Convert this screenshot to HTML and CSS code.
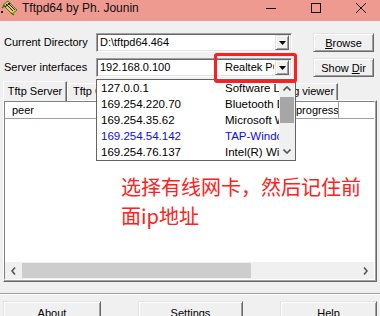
FILE: index.html
```html
<!DOCTYPE html>
<html>
<head>
<meta charset="utf-8">
<link rel="stylesheet" href="styles.css">
</head>
<body>
<div class="win">
  <div class="titlebar">
    <svg class="appicon" width="17" height="16" viewBox="0 0 17 16">
      <path d="M2 5 L7 1 L16 10 L11 14 Z" fill="#f4c24a" stroke="#2a8a20" stroke-width="1"/>
      <path d="M5 4 L12 11 M7 3 L14 10 M4 7 L9 3" stroke="#1a1a1a" stroke-width="1" fill="none"/>
      <path d="M1 8 L4 5 M10 13 L13 15" stroke="#1c7a14" stroke-width="1.2"/>
      <rect x="0" y="11" width="2" height="2" fill="#222"/>
    </svg>
    <span class="title">Tftpd64 by Ph. Jounin</span>
    <div class="caps">
      <span class="cap"><svg width="10" height="10" viewBox="0 0 10 10"><path d="M0 5.5 H10" stroke="#111" stroke-width="1"/></svg></span>
      <span class="cap"><svg width="10" height="10" viewBox="0 0 10 10"><rect x="0.5" y="0.5" width="9" height="9" fill="none" stroke="#111" stroke-width="1"/></svg></span>
      <span class="cap"><svg width="10" height="10" viewBox="0 0 10 10"><path d="M0 0 L10 10 M10 0 L0 10" stroke="#111" stroke-width="1"/></svg></span>
    </div>
  </div>

  <div class="form">
    <span class="label">Current Directory</span>
    <div class="combo">
      <span class="val">D:\tftpd64.464</span>
      <span class="dd"><svg width="7" height="4" viewBox="0 0 7 4"><path d="M0 0 H7 L3.5 4 Z" fill="#000"/></svg></span>
    </div>
    <button class="btn side"><u>B</u>rowse</button>

    <span class="label">Server interfaces</span>
    <div class="combo">
      <span class="val ip">192.168.0.100</span>
      <span class="val2">Realtek PCIe GbE Family Controller</span>
      <span class="dd"><svg width="7" height="4" viewBox="0 0 7 4"><path d="M0 0 H7 L3.5 4 Z" fill="#000"/></svg></span>
    </div>
    <button class="btn side">Show <u>D</u>ir</button>
  </div>

  <div class="tabs">
    <span class="tab sel">Tftp Server</span>
    <span class="tab w2">Tftp Client</span>
    <span class="tab w3">DHCP server</span>
    <span class="tab w3">Syslog server</span>
    <span class="tab w5">Log viewer</span>
  </div>

  <div class="panel">
    <div class="listview">
      <div class="lvhead">
        <span class="col c1">peer</span>
        <span class="col c2">file</span>
        <span class="col c3">start time</span>
        <span class="col c4">progress</span>
        <span class="col c5"></span>
      </div>
      <div class="lvbody"></div>
      <div class="hscroll">
        <span class="harrow"><svg width="5" height="8" viewBox="0 0 5 8"><path d="M4 0.5 L1 4 L4 7.5" stroke="#555" stroke-width="1.6" fill="none"/></svg></span>
        <span class="hthumb"></span>
        <span class="htrack"></span>
        <span class="harrow"><svg width="5" height="8" viewBox="0 0 5 8"><path d="M1 0.5 L4 4 L1 7.5" stroke="#555" stroke-width="1.6" fill="none"/></svg></span>
      </div>
    </div>
  </div>

  <div class="sep"></div>

  <div class="buttons">
    <button class="btn bot b1"><u>A</u>bout</button>
    <button class="btn bot b2"><u>S</u>ettings</button>
    <button class="btn bot b3"><u>H</u>elp</button>
  </div>

  <div class="droplist">
    <div class="items">
      <div class="item"><span class="ic1">127.0.0.1</span><span class="ic2">Software Loopback Interface 1</span></div>
      <div class="item"><span class="ic1">169.254.220.70</span><span class="ic2">Bluetooth Device</span></div>
      <div class="item"><span class="ic1">169.254.35.62</span><span class="ic2">Microsoft Wi-Fi Direct</span></div>
      <div class="item blue"><span class="ic1">169.254.54.142</span><span class="ic2">TAP-Windows Adapter</span></div>
      <div class="item"><span class="ic1">169.254.76.137</span><span class="ic2">Intel(R) Wi-Fi 6</span></div>
    </div>
    <div class="vscroll">
      <span class="varrow"><svg width="8" height="5" viewBox="0 0 8 5"><path d="M0.5 4.5 L4 1 L7.5 4.5" stroke="#555" stroke-width="1.6" fill="none"/></svg></span>
      <span class="vthumb"></span>
      <span class="vtrack"></span>
      <span class="varrow"><svg width="8" height="5" viewBox="0 0 8 5"><path d="M0.5 0.5 L4 4 L7.5 0.5" stroke="#555" stroke-width="1.6" fill="none"/></svg></span>
    </div>
  </div>

  <div class="highlight"></div>
  <div class="note">选择有线网卡，然后记住前<br>面ip地址</div>
</div>
</body>
</html>
```

FILE: styles.css
```css
* { box-sizing: border-box; }
html, body { margin: 0; padding: 0; }
body { background: #f0f0f0; }

.win {
  position: relative;
  width: 380px;
  height: 316px;
  overflow: hidden;
  background: #f0f0f0;
  font-family: "Liberation Sans", Arial, sans-serif;
  font-size: 11px;
  color: #000;
}

/* title bar */
.titlebar {
  height: 21px;
  background: #ee9a90;
  display: flex;
  align-items: flex-start;
}
.appicon { margin: 0 0 0 1px; flex: none; }
.title {
  margin-left: 4px;
  font-size: 12px;
  line-height: 15px;
  padding-top: 1px;
  color: #111;
}
.caps {
  margin-left: auto;
  margin-right: -3px;
  display: flex;
}
.cap {
  width: 45px;
  height: 14px;
  display: flex;
  align-items: center;
  justify-content: center;
  padding-top: 1px;
}

/* form rows */
.form {
  padding: 12px 0 0 4px;
  display: grid;
  grid-template-columns: 92px 196px 82px;
  grid-template-rows: 19px 19px;
  row-gap: 6px;
  align-items: center;
}
.label { line-height: 13px; }
.combo {
  height: 19px;
  background: #fff;
  border: 1px solid;
  border-color: #a0a0a0 #fff #fff #a0a0a0;
  box-shadow: inset 1px 1px #696969, inset -1px -1px #e3e3e3;
  display: flex;
  align-items: center;
  padding: 2px 2px 2px 3px;
  overflow: hidden;
}
.val { flex: 1; white-space: nowrap; line-height: 13px; }
.val.ip { flex: none; width: 125px; }
.val2 {
  flex: 1;
  white-space: nowrap;
  overflow: hidden;
  line-height: 13px;
}
.dd {
  flex: none;
  width: 14px;
  height: 15px;
  margin-left: 1px;
  background: #f0f0f0;
  border: 1px solid;
  border-color: #e3e3e3 #696969 #696969 #e3e3e3;
  box-shadow: inset 1px 1px #fff, inset -1px -1px #a0a0a0;
  display: flex;
  align-items: center;
  justify-content: center;
}
.btn {
  font-family: "Liberation Sans", Arial, sans-serif;
  font-size: 11px;
  color: #000;
  background: #f0f0f0;
  border: 1px solid;
  border-color: #e3e3e3 #696969 #696969 #e3e3e3;
  box-shadow: inset 1px 1px #fff, inset -1px -1px #a0a0a0;
  padding: 0;
  margin: 0;
  white-space: nowrap;
}
.btn.side {
  justify-self: end;
  width: 61px;
  height: 19px;
}

/* tabs */
.tabs {
  margin-top: 4px;
  padding-left: 3px;
  height: 19px;
  display: flex;
  align-items: flex-end;
  position: relative;
  z-index: 1;
}
.tab {
  height: 17px;
  line-height: 15px;
  text-align: center;
  white-space: nowrap;
  background: #f0f0f0;
  border-top: 1px solid #fff;
  border-left: 1px solid #fff;
  border-right: 1px solid #696969;
  box-shadow: inset -1px 0 #a0a0a0;
}
.tab.sel {
  width: 64px;
  height: 20px;
  margin-bottom: -1px;
  line-height: 18px;
}
.tab.w2 { width: 62px; }
.tab.w3 { width: 74px; }
.tab.w5 { width: 61px; }

/* panel + list view */
.panel {
  margin: 0 3px;
  height: 182px;
  border: 1px solid;
  border-color: #fff #696969 #696969 #fff;
  box-shadow: inset -1px -1px #a0a0a0;
  padding: 0 1px 1px 0;
}
.listview {
  height: 100%;
  background: #fff;
  border: 1px solid;
  border-color: #828282 #fff #fff #828282;
  display: flex;
  flex-direction: column;
}
.lvhead {
  height: 17px;
  display: flex;
  border-bottom: 1px solid #a0a0a0;
  flex: none;
}
.col {
  line-height: 16px;
  padding-left: 7px;
  border-right: 1px solid #a0a0a0;
  white-space: nowrap;
  overflow: hidden;
}
.c1 { width: 115px; }
.c2 { width: 80px; }
.c3 { width: 90px; }
.c4 { width: 49px; padding-left: 6px; }
.c5 { flex: 1; border-right: none; }
.lvbody { flex: 1; }
.hscroll {
  height: 17px;
  flex: none;
  display: flex;
  background: #f0f0f0;
}
.harrow {
  width: 17px;
  display: flex;
  align-items: center;
  justify-content: center;
}
.hthumb { width: 229px; background: #cdcdcd; margin: 1px 0; }
.htrack { flex: 1; }

/* separator + bottom buttons */
.sep {
  margin-top: 11px;
  border-top: 1px solid #a0a0a0;
  border-bottom: 1px solid #fff;
}
.buttons {
  margin-top: 6px;
  padding: 0 3px;
  display: flex;
  justify-content: space-between;
}
.btn.bot { height: 23px; }
.b1 { width: 98px; }
.b2 { width: 105px; }
.b3 { width: 97px; }

/* dropdown list (overlay) */
.droplist {
  position: absolute;
  left: 96px;
  top: 79px;
  width: 200px;
  height: 82px;
  background: #fff;
  border: 1px solid #646464;
  display: flex;
  z-index: 5;
}
.items { flex: 1; overflow: hidden; }
.item {
  height: 16px;
  line-height: 16px;
  display: flex;
  white-space: nowrap;
  font-size: 11.5px;
}
.item.blue { color: #0a0aff; }
.ic1 { width: 128px; flex: none; padding-left: 4px; }
.ic2 { flex: 1; overflow: hidden; }
.vscroll {
  width: 16px;
  flex: none;
  background: #f0f0f0;
  display: flex;
  flex-direction: column;
}
.varrow {
  height: 17px;
  display: flex;
  align-items: center;
  justify-content: center;
}
.vthumb { height: 26px; background: #a6a6a6; margin: 0 1px; }
.vtrack { flex: 1; }

/* annotations */
.highlight {
  position: absolute;
  left: 214px;
  top: 53px;
  width: 83px;
  height: 30px;
  border: 3px solid #ff1f1f;
  border-radius: 3px;
  z-index: 6;
}
.note {
  position: absolute;
  left: 121px;
  top: 172px;
  font-family: "Noto Sans CJK SC", "Noto Sans", sans-serif;
  font-size: 20px;
  line-height: 29px;
  color: #ff2020;
  white-space: nowrap;
  z-index: 6;
}
```
